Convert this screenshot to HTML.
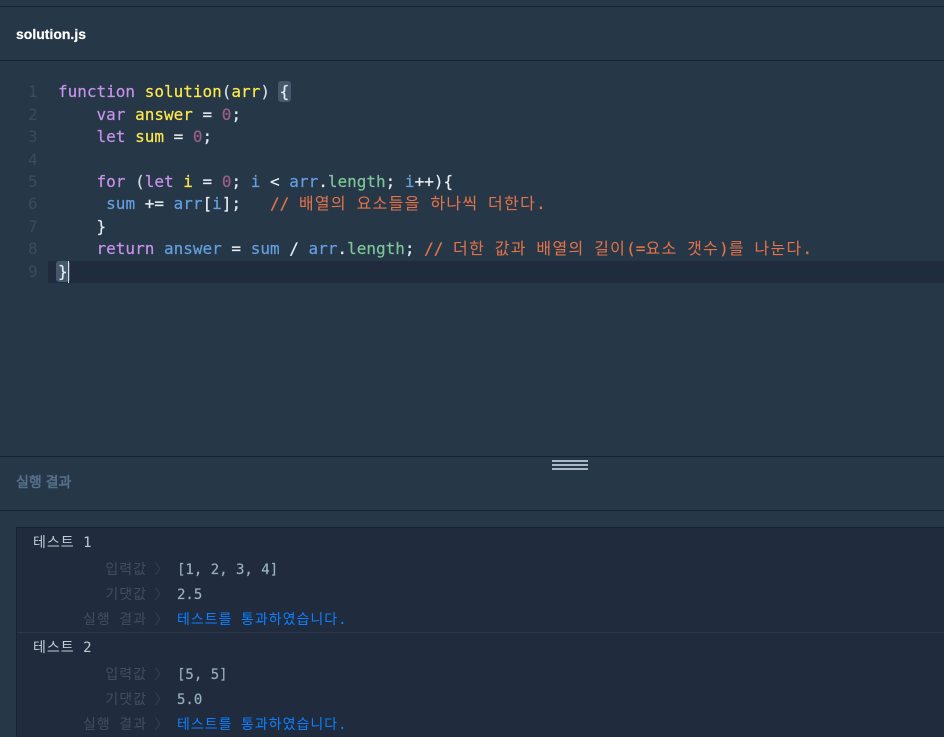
<!DOCTYPE html>
<html lang="ko"><head><meta charset="utf-8"><style>
html,body{margin:0;padding:0;width:944px;height:737px;overflow:hidden;background:#263747}
body{position:relative;font-family:"Liberation Sans",IPAGothic,"WenQuanYi Zen Hei",sans-serif}
.h{position:absolute;left:0;width:944px;height:1px;background:#172334}
.t{position:absolute;white-space:pre}
.code{font:16px/22px "DejaVu Sans Mono",IPAGothic,"WenQuanYi Zen Hei",monospace;color:#d4dce6;left:58px;-webkit-text-stroke:.2px}
.code b{font-weight:normal;letter-spacing:1.3px;-webkit-text-stroke:0}
.n{position:absolute;font:16px/22px "DejaVu Sans Mono",monospace;color:#3a4b60;left:28px}
.k{color:#c792ea}.f{color:#ffe94a}.v{color:#659fe0}.w{color:#e6edf3}.o{color:#9c5f86}.c{color:#e5734a}.p{color:#7ec699}
.br{background:#46586c;border-radius:3px;padding:1px 2px;margin:0 -2px}
.r{font:14px/20px "DejaVu Sans Mono",IPAGothic,"WenQuanYi Zen Hei",monospace}
.r b,.l b{font-weight:normal;letter-spacing:1px}
.l{position:absolute;white-space:pre;width:115px;left:32px;text-align:right;color:#3f4f63;font:14px/20px "DejaVu Sans Mono",IPAGothic,"WenQuanYi Zen Hei",monospace}
.val{color:#98aec2;left:177px;-webkit-text-stroke:.2px}
.ok{color:#0d80ff;left:177px}
.ti{color:#c3ccd5;left:33px}
.ch{left:154px;color:#34424f}
</style></head><body>
<div class="h" style="top:6px"></div>
<div class="t" style="left:16px;top:25px;font-size:14px;line-height:18px;font-weight:bold;color:#fff;-webkit-text-stroke:.2px">solution.js</div>
<div class="h" style="top:60px"></div>
<div style="position:absolute;left:48px;top:261px;width:896px;height:22px;background:#202b3d"></div>
<div class="n" style="top:81px">1</div><div class="n" style="top:104px">2</div><div class="n" style="top:126px">3</div><div class="n" style="top:149px">4</div><div class="n" style="top:171px">5</div><div class="n" style="top:193px">6</div><div class="n" style="top:216px">7</div><div class="n" style="top:238px">8</div><div class="n" style="top:261px">9</div>
<div class="t code" style="top:81px"><span class="k">function</span> <span class="f">solution</span>(<span class="f">arr</span>) <span class="br w">{</span></div>
<div class="t code" style="top:104px">    <span class="k">var</span> <span class="f">answer</span> <span class="w">=</span> <span class="o">0</span><span class="w">;</span></div>
<div class="t code" style="top:126px">    <span class="k">let</span> <span class="f">sum</span> <span class="w">=</span> <span class="o">0</span><span class="w">;</span></div>
<div class="t code" style="top:171px">    <span class="k">for</span> (<span class="k">let</span> <span class="f">i</span> <span class="w">=</span> <span class="o">0</span><span class="w">;</span> <span class="v">i</span> <span class="w">&lt;</span> <span class="v">arr</span><span class="w">.</span><span class="p">length</span><span class="w">;</span> <span class="v">i</span><span class="w">++){</span></div>
<div class="t code" style="top:193px">     <span class="v">sum</span> <span class="w">+=</span> <span class="v">arr</span><span class="w">[</span><span class="v">i</span><span class="w">];</span>   <span class="c">// <b>배열의</b> <b>요소들을</b> <b>하나씩</b> <b>더한다</b>.</span></div>
<div class="t code" style="top:216px">    <span class="w">}</span></div>
<div class="t code" style="top:238px">    <span class="k">return</span> <span class="v">answer</span> <span class="w">=</span> <span class="v">sum</span> <span class="w">/</span> <span class="v">arr</span><span class="w">.</span><span class="p">length</span><span class="w">;</span> <span class="c">// <b>더한</b> <b>값과</b> <b>배열의</b> <b>길이</b>(=<b>요소</b> <b>갯수</b>)<b>를</b> <b>나눈다</b>.</span></div>
<div class="t code" style="top:261px"><span class="br w">}</span></div>
<div style="position:absolute;left:68px;top:261px;width:1px;height:22px;background:#d8dfe6"></div>
<div class="h" style="top:456px"></div>
<div style="position:absolute;left:552px;top:460px;width:36px;height:2px;background:#a9b8c4"></div>
<div style="position:absolute;left:552px;top:464px;width:36px;height:2px;background:#a9b8c4"></div>
<div style="position:absolute;left:552px;top:468px;width:36px;height:2px;background:#a9b8c4"></div>
<div class="t" style="left:16px;top:473px;font-size:14px;line-height:18px;font-weight:bold;color:#56708c">실행 결과</div>
<div class="h" style="top:510px"></div>
<div style="position:absolute;left:16px;top:527px;width:928px;height:210px;background:#202b3d;box-shadow:inset 1px 1px 0 #172334"></div>
<div class="h" style="top:632px;left:17px;background:#2a3a4c"></div>
<div class="t r ti" style="top:533px"><b>테스트</b> 1</div>
<div class="l" style="top:560px"><b>입력값</b></div><div class="t r ch" style="top:560px">〉</div><div class="t r val" style="top:560px">[1, 2, 3, 4]</div>
<div class="l" style="top:585px"><b>기댓값</b></div><div class="t r ch" style="top:585px">〉</div><div class="t r val" style="top:585px">2.5</div>
<div class="l" style="top:610px"><b>실행</b> <b>결과</b></div><div class="t r ch" style="top:610px">〉</div><div class="t r ok" style="top:610px"><b>테스트를</b> <b>통과하였습니다</b>.</div>
<div class="t r ti" style="top:638px"><b>테스트</b> 2</div>
<div class="l" style="top:665px"><b>입력값</b></div><div class="t r ch" style="top:665px">〉</div><div class="t r val" style="top:665px">[5, 5]</div>
<div class="l" style="top:690px"><b>기댓값</b></div><div class="t r ch" style="top:690px">〉</div><div class="t r val" style="top:690px">5.0</div>
<div class="l" style="top:715px"><b>실행</b> <b>결과</b></div><div class="t r ch" style="top:715px">〉</div><div class="t r ok" style="top:715px"><b>테스트를</b> <b>통과하였습니다</b>.</div>
</body></html>
